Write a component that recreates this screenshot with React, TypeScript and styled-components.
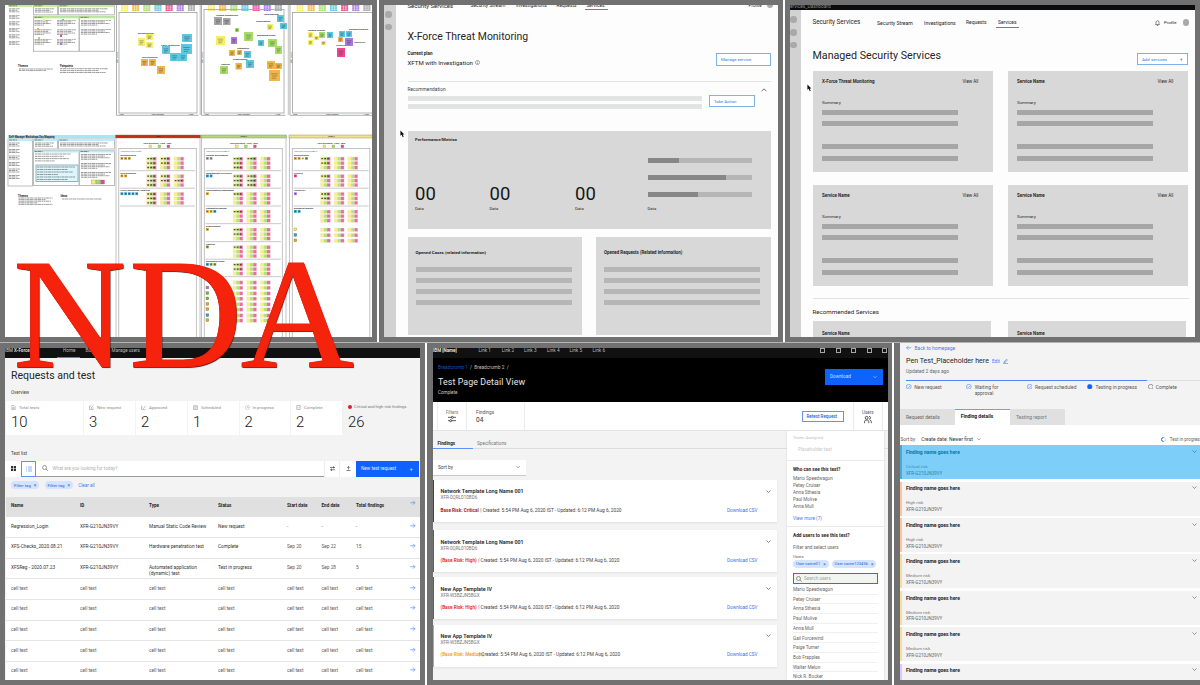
import React from "react";
import styled, { createGlobalStyle } from "styled-components";

const Global = createGlobalStyle`
  * { box-sizing: border-box; }
  body { margin: 0; background: #717171; overflow: hidden; }
  #root { font-family: Roboto, "Liberation Sans", sans-serif; color: #262626; }
`;

const BLUE = "#0f62fe";

/* ---------- shared parts ---------- */

const Page = styled.div`
  position: relative;
  width: 1200px;
  height: 685px;
  overflow: hidden;
  background: #fff;
`;
const FrameRow = styled.div<{ $cols: string }>`
  display: grid;
  grid-template-columns: ${(p) => p.$cols};
  gap: 2px;
  height: 342px;
`;
const Seam = styled.div`
  height: 1px;
  background: #b4b4b4;
`;
const Frame = styled.section<{ $pad?: string }>`
  background: #717171;
  padding: ${(p) => p.$pad ?? "5px"};
  overflow: hidden;
`;
const Screen = styled.div<{ $bg?: string }>`
  display: flex;
  width: 100%;
  height: 100%;
  overflow: hidden;
  background: ${(p) => p.$bg ?? "#fdfdfd"};
`;
const Column = styled.div<{ $pad?: string }>`
  flex: 1;
  min-width: 0;
  padding: ${(p) => p.$pad ?? "0"};
`;
const Text = styled.span<{ $s: number; $w?: number; $c?: string; $ls?: number }>`
  display: block;
  padding-top: 1px;
  white-space: nowrap;
  font-size: ${(p) => p.$s}px;
  line-height: 1.2;
  font-weight: ${(p) => p.$w ?? 400};
  color: ${(p) => p.$c ?? "#262626"};
  letter-spacing: ${(p) => p.$ls ?? 0}px;
`;
const Line = styled.div<{ $h: number; $mt?: number; $gap?: number; $between?: boolean }>`
  display: flex;
  align-items: center;
  justify-content: ${(p) => (p.$between ? "space-between" : "flex-start")};
  gap: ${(p) => p.$gap ?? 0}px;
  height: ${(p) => p.$h}px;
  margin-top: ${(p) => p.$mt ?? 0}px;
`;
const Divider = styled.div<{ $mt?: number; $c?: string }>`
  height: 1px;
  margin-top: ${(p) => p.$mt ?? 0}px;
  background: ${(p) => p.$c ?? "#e2e2e2"};
`;
const Rail = styled.aside<{ $w: number; $top: number; $gap: number; $inset: number }>`
  display: flex;
  flex-direction: column;
  flex: none;
  gap: ${(p) => p.$gap}px;
  width: ${(p) => p.$w}px;
  padding-left: ${(p) => p.$inset}px;
  background: #d2d2d2;
  > :first-child { margin-top: ${(p) => p.$top}px; }
`;
const Dot = styled.i<{ $d?: number }>`
  flex: none;
  width: ${(p) => p.$d ?? 6.5}px;
  height: ${(p) => p.$d ?? 6.5}px;
  border-radius: 50%;
  background: #a9a9a9;
`;
const Bar = styled.div<{ $w: number; $h?: number; $mt?: number; $c?: string }>`
  width: ${(p) => p.$w}px;
  height: ${(p) => p.$h ?? 5}px;
  margin-top: ${(p) => p.$mt ?? 0}px;
  background: ${(p) => p.$c ?? "#b6b6b6"};
`;
const GhostButton = styled.div<{ $w: number; $h: number; $mt?: number; $c?: string }>`
  display: flex;
  flex: none;
  align-items: center;
  justify-content: space-between;
  width: ${(p) => p.$w}px;
  height: ${(p) => p.$h}px;
  margin-top: ${(p) => p.$mt ?? 0}px;
  padding: 0 4px;
  border: 1px solid ${(p) => p.$c ?? "#7fb0ea"};
  background: #fff;
`;
const NavGrid = styled.nav<{ $cols: string; $h: number; $mt?: number }>`
  display: grid;
  grid-template-columns: ${(p) => p.$cols};
  align-items: center;
  height: ${(p) => p.$h}px;
  margin-top: ${(p) => p.$mt ?? 0}px;
`;
const NavActive = styled.div`
  width: 23px;
  padding: 2px 0 1px 2px;
  border-bottom: 1px solid #7a7a7a;
`;
const Pointer = styled.svg<{ $x: number; $y: number }>`
  position: absolute;
  left: ${(p) => p.$x}px;
  top: ${(p) => p.$y}px;
  width: 5px;
  height: 8px;
`;
const Cursor = ({ x, y }: { x: number; y: number }) => (
  <Pointer $x={x} $y={y} viewBox="0 0 5 8">
    <path d="M.4.4v5.4l1.3-1.1 1 2.5 1-.4-1-2.4h1.7z" fill="#111" />
  </Pointer>
);
const Chevron = ({ up, c = "#555", s = 5 }: { up?: boolean; c?: string; s?: number }) => (
  <svg width={s} height={s} viewBox="0 0 10 10" fill="none" stroke={c} strokeWidth="1.4">
    <path d={up ? "M1 7l4-4 4 4" : "M1 3l4 4 4-4"} />
  </svg>
);
const Bell = () => (
  <svg width="5" height="6" viewBox="0 0 10 12" fill="none" stroke="#444" strokeWidth="1.2">
    <path d="M1 9h8L8 7V4.500a3 3 0 0 0-6 0V7zM4 9.500v1.500h2V9.500" />
  </svg>
);
const Arrow = ({ left, s = 5.5 }: { left?: boolean; s?: number }) => (
  <svg width={s} height={s} viewBox="0 0 10 10" fill="none" stroke="#5a91fb" strokeWidth="1.3">
    <path d={left ? "M9.500 5H.8M4.500 1.500L1 5l3.500 3.500" : "M.5 5h8.700M5.500 1.500L9 5 5.500 8.500"} />
  </svg>
);
const Magnifier = () => (
  <svg width="6" height="6" viewBox="0 0 12 12" fill="none" stroke="#555" strokeWidth="1.2">
    <circle cx="5" cy="5" r="4" />
    <path d="M8 8l3.500 3.500" />
  </svg>
);

/* ---------- 1. research whiteboard ---------- */

const Y = "#f6ee6e", O = "#f0b64a", G = "#a9dd6a", C = "#5ec8e2", P = "#e8488f", V = "#a878e0", S = "#a5a5a5";
const Canvas = styled.svg`
  display: block;
  background: #fff;
`;

type Box = [number, number, number, number, string];
const NOTES: Box[] = [
  [138, 38, 7, 8, Y], [146, 34, 7, 6, Y], [146, 42, 7, 6, Y],
  [141, 59, 7, 7, O], [149, 59, 7, 7, O], [157, 66, 8, 8, O],
  [182, 34, 10, 8, C], [162, 46, 8, 8, C], [181, 44, 11, 10, C], [170, 53, 9, 8, C], [179, 53, 8, 8, C],
  [214, 17, 8, 8, S], [223, 18, 7.5, 7, S], [277, 15, 7, 7, C], [267, 24, 6, 6, Y], [280, 23, 7, 6, C],
  [235, 28, 4, 4, G], [244, 32, 9, 9, G], [216, 36, 9, 9, Y], [231, 37, 6, 7, V], [258, 40, 6, 6, C],
  [268, 39, 9, 8, G], [275, 46, 7, 8, G], [229, 50, 6, 6, O], [237, 50, 5, 5, O], [244, 51, 7, 7, C],
  [246, 60, 8, 8, C], [235.5, 63, 6.5, 6.5, O], [220, 66, 8, 8, G], [267, 61, 8, 8, O], [275, 63, 7, 6, O], [269, 70, 11, 11, O],
  [308, 32, 5, 6, Y], [314, 36, 5, 4, Y], [319, 32, 6, 6, G], [308, 40, 5, 5, Y], [321, 41, 5, 4, Y],
  [327, 32, 6, 6, C], [339, 31, 6, 6, C], [346, 31, 6, 6, C], [338, 37, 5, 5, O], [345, 38, 8, 8, V], [337, 48, 8, 9, P],
];
const TAGS: [number, number, string][] = [
  [138, 33.5, "Dissatisfaction"], [161, 45.5, "Policy, monitoring"], [142, 58.2, "User behaviour"],
  [216, 15.7, "Lacking transparency"], [264, 15, "Task Difficulty"], [256, 22, "Consolidation"], [257, 36, "Dashboard/Usage"],
  [237, 49, "Automation"], [233, 59.7, "Requirements"], [221, 64.7, "Timeline"],
  [308, 30.7, "Lacking insights"], [349, 29.7, "Document Reports"], [354, 42.7, "Having API"], [336, 45.9, "Services"],
];
const Scribble = ({ x, y, w, n, step = 1.6 }: { x: number; y: number; w: number; n: number; step?: number }) => (
  <g stroke="#333" strokeWidth=".6" strokeDasharray="2.2 .4 3.5 .5 1.3 .4" opacity=".8">
    {Array.from({ length: n }, (_, i) => (
      <path key={i} d={`M${x} ${y + i * step}h${w * [1, 0.8, 0.95, 0.55][i % 4]}`} />
    ))}
  </g>
);
const ChipSet = ({ x }: { x: number }) => (
  <g>
    {[Y, O, G, C, P, V, S].map((c, i) => (
      <g key={c}>
        <rect x={x + i * 11.15} y={5} width={7} height={6} fill={c} />
        <path
          d={`M${x + i * 11.15 + 2.3} 5v6m2.4 -6v6M${x + i * 11.15} 7h7m-7 2.2h7`}
          stroke="#fff" strokeWidth=".45"
        />
      </g>
    ))}
  </g>
);
const MatrixBoard = ({ x, w, top = 12.5 }: { x: number; w: number; top?: number }) => (
  <g>
    <path d={`M${x} 5V115.300h${w + 4}`} fill="none" stroke="#b0b0b0" strokeWidth="1" />
    <rect x={x + 2.5} y={top} width={w} height={113 - top} fill="none" stroke="#aaa" strokeWidth=".9" />
    <text x={x + 3} y={115} fontSize="2.3">Low</text>
    <text x={x + w / 2 - 4} y={115} fontSize="2.3">User Impact</text>
    <text x={x + w - 6} y={115} fontSize="2.3">High</text>
    <text transform={`translate(${x + 1.8} 63) rotate(-90)`} fontSize="2.2">Effort Level</text>
  </g>
);
const TRIO = ["#f7f08a", "#b5e27e", "#ec6aa8"];
const Trios = ({ x, y, used = 0 }: { x: number; y: number; used?: number }) => (
  <g>
    {[0, 1, 2].map((k) => (
      <g key={k}>
        {TRIO.map((c, i) => (
          <rect key={c} x={x + k * 13.7 + i * 3.3} y={y} width={3.3} height={3.5} fill={c} />
        ))}
        <rect x={x + k * 13.7} y={y} width={9.9} height={3.5} fill="none" stroke="#f6dccb" strokeWidth=".3" />
        {k < used && (
          <path d={`M${x + k * 13.7 + 0.8} ${y + 1.7}h8.2`} stroke="#2d2d12" strokeWidth="1.3" strokeDasharray="1.8 1.2" opacity=".8" />
        )}
      </g>
    ))}
  </g>
);
type Group = { y: number; label: string; marks: string[]; used: number[] };
type Theme = { x: number; w: number; head: string; name: string; label: string; trio: number; groups: Group[]; tail: [number, string][] };
const B = "#3b9cc4", D = "#d9a92f", N = "#7fae3c";
const THEMES: Theme[] = [
  {
    x: 116, w: 84, head: "#c92a1e", name: "Red", label: "Themes from draft", trio: 146.5, tail: [],
    groups: [
      { y: 157, label: "Dissatisfaction", marks: [D, D, D], used: [2, 2, 1] },
      { y: 174.5, label: "User behaviour", marks: [D, D], used: [2, 3, 1] },
      { y: 192.3, label: "Policy, monitoring, reporting", marks: [B, B, B, B, B], used: [1, 1, 1] },
    ],
  },
  {
    x: 201.5, w: 84.5, head: "#b4d97a", name: "DRAFT", label: "Themes from DRAFT", trio: 233,
    tail: [[280.8, ""], [286.1, V], [291.7, N], [297, N], [302.6, D], [307.8, D], [313.8, B], [318.8, D]],
    groups: [
      { y: 157, label: "Lacking development", marks: [S, S], used: [2, 1, 1] },
      { y: 174.5, label: "Task difficulty on service", marks: [B, B], used: [2, 2, 2] },
      { y: 192.3, label: "Consolidation/Aggregation", marks: [D], used: [1, 0, 0] },
      { y: 210, label: "Automation/Manual", marks: [D, D, B], used: [1, 0, 0] },
      { y: 228, label: "Requirements", marks: [D], used: [1, 1, 0] },
      { y: 245.5, label: "Timeline", marks: [N], used: [1, 0, 0] },
      { y: 263, label: "Dashboard/Usage", marks: [B, N, N], used: [1, 1, 0] },
    ],
  },
  {
    x: 289.5, w: 84, head: "#efe48a", name: "DRAFT", label: "Themes from DRAFT", trio: 320.5,
    tail: [[228, Y], [233.5, B], [239, D]],
    groups: [
      { y: 157, label: "Differentiators", marks: [D, D, Y, N], used: [1, 1, 0] },
      { y: 174.5, label: "Services", marks: [P], used: [1, 0, 0] },
      { y: 192.3, label: "Having API", marks: [V], used: [1, 1, 0] },
      { y: 210, label: "Document Reports", marks: [B, B], used: [0, 0, 0] },
    ],
  },
];
const ThemeBoard = ({ t }: { t: Theme }) => (
  <g>
    <path d={`M${t.x} 138V337M${t.x + t.w} 138V337`} stroke="#c4c4c4" strokeWidth="1" />
    <rect x={t.x - 0.5} y={135} width={t.w + 1} height={3} fill={t.head} stroke="#7c7c50" strokeWidth=".4" />
    <text x={t.x + t.w / 2} y={137.4} fontSize="2.2" textAnchor="middle">{t.name}</text>
    <rect x={t.x + 2.8} y={148.5} width={t.w - 6.5} height={190} fill="none" stroke="#b4b4b4" strokeWidth=".8" />
    <text x={t.trio - 3} y={143.6} fontSize="2.3" fontWeight="700">User Research · Pain · Idea</text>
    {[Y, G, P].map((c, i) => (
      <rect key={c} x={t.trio + 2.5 + i * 9} y={145} width={2.8} height={2.8} fill={c} stroke="#8a8a50" strokeWidth=".3" />
    ))}
    <text x={t.x + 4.5} y={151.8} fontSize="2.5" fill="#2586ad">{t.label}</text>
    {t.groups.map((g, gi) => (
      <g key={g.label}>
        <text x={t.x + 4.5} y={g.y - 1} fontSize="2.3" fontWeight="700">{g.label}</text>
        {g.marks.map((m, i) => (
          <g key={i}>
            <rect x={t.x + 4.5 + i * 3.7} y={g.y} width={2.8} height={2.8} fill={m} />
            <path d={`M${t.x + 5.2 + i * 3.7} ${g.y + 1.4}h1.4`} stroke="#333" strokeWidth=".7" />
          </g>
        ))}
        {g.used.map((u, i) => <Trios key={i} x={t.trio} y={g.y + i * 4.4} used={u} />)}
        {(gi < 3 || t.tail.length > 3) && (
          <path d={`M${t.x + 4} ${g.y + 13.7}h${t.w - 9}`} stroke="#c2c2c2" strokeWidth=".9" />
        )}
      </g>
    ))}
    {t.tail.map(([y, c]) => (
      <g key={y}>
        {c && <rect x={t.x + 4.5} y={y} width={2.8} height={2.8} fill={c} stroke="#665" strokeWidth=".3" />}
        <Trios x={t.trio} y={y} />
      </g>
    ))}
  </g>
);
const BriefBoard = ({ y, head, tint }: { y: number; head: string; tint?: boolean }) => {
  const boxes: [number, number, number, number][] = [
    [8, y, 24.5, 47], [33.5, y, 24, 10], [58.5, y, 56, 10], [33.5, y + 11.5, 45.5, 35], [79.5, y + 11.5, 35, 35],
  ];
  return (
    <g>
      {boxes.map(([bx, by, bw, bh], i) => (
        <g key={i}>
          <rect x={bx} y={by} width={bw} height={bh} fill="#fff" stroke={i || tint ? "#b5b5b5" : "none"} strokeWidth=".9" />
          <rect x={bx} y={by} width={bw} height={2} fill={head} />
          <path d={`M${bx + 1} ${by + 1}h8`} stroke="#444" strokeWidth=".6" strokeDasharray="3 .5" />
        </g>
      ))}
      {[0, 1, 2, 3, 4, 5].map((i) => <Scribble key={i} x={9} y={y + 4 + i * 6.5} w={11} n={3} step={1.5} />)}
      <Scribble x={35} y={y + 4} w={19} n={3} />
      <Scribble x={60} y={y + 4} w={48} n={3} step={1.5} />
      {tint ? (
        <g>
          <Scribble x={35} y={y + 15} w={36} n={4} step={2.3} />
          <rect x={36} y={y + 26} width={42} height={16.5} fill="#def5fb" stroke="#7aa3b0" strokeWidth=".8" />
          <Scribble x={37} y={y + 28} w={38} n={6} step={2.5} />
        </g>
      ) : (
        [0, 1, 2].map((i) => (
          <g key={i}>
            <Scribble x={34.5} y={y + 15.5 + i * 9.5} w={17} n={4} />
            <Scribble x={57} y={y + 15.5 + i * 9.5} w={19} n={4} />
          </g>
        ))
      )}
      {(tint ? [0, 1, 2] : [0, 1]).map((i) => <Scribble key={i} x={81} y={y + 15.5 + i * 9} w={30} n={4} />)}
    </g>
  );
};
const Whiteboard = () => (
  <Canvas width="367" height="332" viewBox="5 5 367 332" fill="#222" fontFamily="Roboto, sans-serif">
    <BriefBoard y={4.8} head="#b9ee88" />
    {[[43, 19, Y], [62, 19, C], [37, 28, O], [60, 35, P], [38, 37, G], [60, 43, V]].map(([x, y, c]) => (
      <rect key={`${x}${y}`} x={x as number} y={y as number} width="2" height="2" fill={c as string} />
    ))}
    <text x="18" y="67.3" fontSize="2.7" fontWeight="700">Themes</text>
    <Scribble x={19} y={69} w={34} n={2} />
    <text x="60" y="67.3" fontSize="2.7" fontWeight="700">Painpoints</text>
    <Scribble x={60} y={68.7} w={48} n={3} step={1.9} />

    <ChipSet x={121} />
    <ChipSet x={208} />
    <ChipSet x={296.5} />
    <MatrixBoard x={116.5} w={78} />
    <path d="M200.300 5V115M288.500 5V115" stroke="#cfcfcf" strokeWidth="1.5" />
    <MatrixBoard x={201.5} w={80} top={9.5} />
    <MatrixBoard x={290} w={80} />
    {NOTES.map(([x, y, w, h, c]) => (
      <g key={`${x}-${y}`}>
        <rect x={x} y={y} width={w} height={h} fill={c} />
        <path
          d={`M${x + w * 0.2} ${y + h * 0.35}h${w * 0.6}m${-w * 0.55} ${h * 0.2}h${w * 0.5}m${-w * 0.5} ${h * 0.2}h${w * 0.4}`}
          stroke="#222" strokeWidth=".6" opacity=".55" fill="none"
        />
      </g>
    ))}
    {TAGS.map(([x, y, s]) => <text key={s} x={x} y={y} fontSize="2.3" fontWeight="700">{s}</text>)}

    <rect x="8" y="135" width="107" height="3.2" fill="#a6e6f7" />
    <text x="9" y="137.6" fontSize="2.6" fontWeight="700">Self-Manager Workshops Day Mapping</text>
    <BriefBoard y={139} head="#bdebf7" tint />
    {[Y, G, P].map((c, i) => <rect key={c} x={91.5 + i * 4.5} y={180} width="4" height="4" fill={c} stroke="#777" strokeWidth=".3" />)}
    <text x="18" y="196.5" fontSize="2.7" fontWeight="700">Themes</text>
    <Scribble x={18.5} y={198} w={34} n={5} />
    <text x="60.5" y="196.5" fontSize="2.7" fontWeight="700">Ideas</text>
    <Scribble x={62} y={199} w={40} n={1} />
    {THEMES.map((t) => <ThemeBoard key={t.x} t={t} />)}
  </Canvas>
);

/* ---------- 2. threat monitoring wireframe ---------- */

const SplitRow = styled.div<{ $cols: string; $mt?: number; $gap?: number }>`
  display: grid;
  grid-template-columns: ${(p) => p.$cols};
  column-gap: ${(p) => p.$gap ?? 0}px;
  align-items: start;
  margin-top: ${(p) => p.$mt ?? 0}px;
`;
const WireCard = styled.div<{ $h: number; $mt?: number; $pad?: string }>`
  height: ${(p) => p.$h}px;
  margin-top: ${(p) => p.$mt ?? 0}px;
  padding: ${(p) => p.$pad ?? "10px 9px"};
  background: #d8d8d8;
`;
const Meter = styled(Bar)<{ $v: number }>`
  background: linear-gradient(to right, #878787 ${(p) => p.$v}px, #b6b6b6 ${(p) => p.$v}px);
`;
const Metric = styled.div`
  padding-top: 25px;
`;
const BigNumber = styled(Text)`
  height: 21px;
  line-height: 20px;
`;
const RecommendationHead = styled.div`
  display: flex;
  align-items: center;
  justify-content: space-between;
  height: 7px;
  margin-top: 4px;
  padding-right: 3.5px;
`;

const ThreatMonitoring = () => (
  <Screen>
    <Rail $w={12} $inset={1} $top={-6.25} $gap={6}>
      <Dot />
      <Dot />
      <Dot />
    </Rail>
    <Column $pad="0 7.5px 0 11.5px">
      <NavGrid $cols="63px 45.5px 40.5px 28px 164px 18px 8px" $h={11} $mt={-5.5}>
        <Text $s={6}>Security Services</Text>
        <Text $s={4.95}>Security Stream</Text>
        <Text $s={4.95}>Investigations</Text>
        <Text $s={4.8}>Requests</Text>
        <NavActive><Text $s={4.8}>Services</Text></NavActive>
        <Text $s={4.6}>Profile</Text>
        <Dot $d={6} />
      </NavGrid>
      <Line $h={14} $mt={19}><Text $s={10.45}>X-Force Threat Monitoring</Text></Line>
      <SplitRow $cols="308.5px 55px" $mt={6.5}>
        <div>
          <Line $h={7}><Text $s={4.5} $w={700}>Current plan</Text></Line>
          <Line $h={9} $mt={1} $gap={2}>
            <Text $s={6.1}>XFTM with Investigation</Text>
            <svg width="5" height="5" viewBox="0 0 10 10" fill="none" stroke="#555" strokeWidth="1"><circle cx="5" cy="5" r="4.2" /><path d="M5 4.500V8M5 2v1.200" /></svg>
          </Line>
        </div>
        <GhostButton $w={55} $h={13} $mt={3}><Text $s={4.3} $c="#2f7de0">Manage service</Text></GhostButton>
      </SplitRow>
      <Divider $mt={14} />
      <RecommendationHead><Text $s={4.85} $c="#444">Recommendation</Text><Chevron up s={6} /></RecommendationHead>
      <SplitRow $cols="294.5px 46px" $gap={7} $mt={2}>
        <div>
          <Bar $w={294.5} $c="#e2e3e3" $mt={1} />
          <Bar $w={294.5} $c="#e2e3e3" $mt={3} />
        </div>
        <GhostButton $w={46} $h={12}><Text $s={4.3} $c="#2f7de0">Take Action</Text></GhostButton>
      </SplitRow>
      <WireCard $h={98} $mt={22} $pad="4.5px 7.5px">
        <Line $h={7}><Text $s={4.35} $w={700}>Performance/Metrics</Text></Line>
        <SplitRow $cols="74.5px 85.5px 72.5px 105px" $mt={15}>
          {[0, 1, 2].map((i) => (
            <Metric key={i}>
              <BigNumber $s={18.5} $c="#161616">00</BigNumber>
              <Line $h={7} $mt={1.5}><Text $s={4.2}>Data</Text></Line>
            </Metric>
          ))}
          <div>
            <Meter $w={104.5} $v={31} />
            <Meter $w={104.5} $v={78.5} $mt={12} />
            <Meter $w={104.5} $v={50} $mt={12} />
            <Line $h={7} $mt={8.5}><Text $s={4.2}>Data</Text></Line>
          </div>
        </SplitRow>
      </WireCard>
      <SplitRow $cols="174.5px 174.5px" $gap={14} $mt={8}>
        {["Opened Cases (related information)", "Opened Requests (Related information)"].map((t, i) => (
          <WireCard key={t} $h={98} $pad="12px 8px">
            <Line $h={7}><Text $s={i ? 4.42 : 4.4} $w={700}>{t}</Text></Line>
            <Bar $w={156} $h={5.5} $mt={10.5} />
            <Bar $w={156} $h={5.5} $mt={5.6} />
            <Bar $w={156} $h={5.5} $mt={5.6} />
            <Bar $w={156} $h={5.5} $mt={5.6} />
          </WireCard>
        ))}
      </SplitRow>
    </Column>
  </Screen>
);

/* ---------- 3. managed services wireframe ---------- */

const BrowserBar = styled.div`
  flex: none;
  height: 5px;
  overflow: hidden;
  background: #0b0c0d;
`;
const BrowserTitle = styled(Text)`
  margin-top: -2.5px;
`;
const Stack = styled.div`
  display: flex;
  flex-direction: column;
  width: 100%;
`;
const Body = styled.div`
  display: flex;
  flex: 1;
  min-height: 0;
  overflow: hidden;
`;
const ServiceCard = ({ name }: { name: string }) => (
  <WireCard $h={101} $pad="7px 9.5px">
    <SplitRow $cols="140.5px 20px">
      <Line $h={8}><Text $s={4.45} $w={700}>{name}</Text></Line>
      <Line $h={8}><Text $s={4.5}>View All</Text></Line>
    </SplitRow>
    <Line $h={8} $mt={12.5}><Text $s={4.4}>Summary</Text></Line>
    <Bar $w={136} $mt={3.5} $c="#a6a6a6" />
    <Bar $w={136} $mt={6} $c="#a6a6a6" />
    <Bar $w={136} $mt={18} $c="#a6a6a6" />
    <Bar $w={136} $mt={7} $c="#a6a6a6" />
  </WireCard>
);
const ManagedServices = () => (
  <Screen>
    <Stack>
      <BrowserBar><BrowserTitle $s={4.8} $c="#8a8a8a">ervices_Dashboard</BrowserTitle></BrowserBar>
      <Body>
        <Rail $w={10.5} $inset={0} $top={6.3} $gap={6.3}><Dot /><Dot /><Dot /></Rail>
        <Column $pad="5.5px 6px 0 12px">
          <NavGrid $cols="64.5px 47px 42px 30px 159px 9px 18.5px 8px" $h={14}>
            <Text $s={6.3}>Security Services</Text>
            <Text $s={5.1}>Security Stream</Text>
            <Text $s={5.1}>Investigations</Text>
            <Text $s={4.95}>Requests</Text>
            <NavActive><Text $s={4.9}>Services</Text></NavActive>
            <Bell />
            <Text $s={4.4}>Profile</Text>
            <Dot />
          </NavGrid>
          <SplitRow $cols="324.5px 50.5px" $mt={18.5}>
            <Line $h={14} $mt={0.5}><Text $s={10.7}>Managed Security Services</Text></Line>
            <GhostButton $w={50.5} $h={12.5} $mt={4.5}>
              <Text $s={4.4} $c="#2f7de0">Add services</Text>
              <Text $s={4.5} $c="#2f7de0">+</Text>
            </GhostButton>
          </SplitRow>
          <SplitRow $cols="180px 180px" $gap={15} $mt={5.5}>
            <ServiceCard name="X-Force Threat Monitoring" />
            <ServiceCard name="Service Name" />
          </SplitRow>
          <SplitRow $cols="180px 180px" $gap={15} $mt={13}>
            <ServiceCard name="Service Name" />
            <ServiceCard name="Service Name" />
          </SplitRow>
          <Divider $mt={12.5} />
          <Line $h={9} $mt={8.5}><Text $s={6.2}>Recommended Services</Text></Line>
          <SplitRow $cols="178px 178px" $gap={17} $mt={4.5}>
            {[0, 1].map((i) => (
              <WireCard key={i} $h={20} $pad="8px 9.5px">
                <Line $h={8}><Text $s={4.45} $w={700}>Service Name</Text></Line>
              </WireCard>
            ))}
          </SplitRow>
        </Column>
      </Body>
    </Stack>
  </Screen>
);

/* ---------- 4. requests dashboard ---------- */

const TopBar = styled.nav<{ $cols: string; $h: number }>`
  display: grid;
  grid-template-columns: ${(p) => p.$cols};
  grid-template-rows: 4.5px;
  align-items: center;
  flex: none;
  height: ${(p) => p.$h}px;
  background: #111;
`;
const NavTab = styled.div`
  align-self: start;
  width: 23px;
  height: 10px;
  border-bottom: 1px solid #4a84f8;
`;
const NavTabLabel = styled(Text)`
  margin: -1px 0 0 6px;
`;
const Stats = styled.div`
  display: grid;
  grid-template-columns: 78px 52px 52px 51.5px 51.5px 52px 1fr;
  height: 34px;
`;
const Stat = styled.div<{ $plain?: boolean }>`
  padding: 3px 0 0 5px;
  border-right: ${(p) => (p.$plain ? "0" : "1px solid #f3f3f3")};
  background: ${(p) => (p.$plain ? "transparent" : "#fff")};
`;
const Toolbar = styled.div`
  display: grid;
  flex: none;
  grid-template-columns: 16px 15px 288px 15px 17px 62.5px;
  height: 16px;
  margin-right: 1.5px;
  background: #fff;
`;
const Tool = styled.div<{ $on?: boolean; $line?: boolean }>`
  display: flex;
  align-items: center;
  justify-content: center;
  border: ${(p) => (p.$on ? "1px solid #5c92fb" : "0")};
  border-left: ${(p) => (p.$on ? "1px solid #5c92fb" : p.$line ? "1px solid #eee" : "0")};
`;
const SearchBox = styled.div`
  display: flex;
  align-items: center;
  gap: 4.5px;
  padding-left: 6px;
  border-bottom: 1px solid #9a9a9a;
`;
const PrimaryButton = styled.div<{ $w: number; $h: number }>`
  display: flex;
  flex: none;
  align-items: center;
  justify-content: space-between;
  width: ${(p) => p.$w}px;
  height: ${(p) => p.$h}px;
  padding: 0 6px 0 5px;
  background: ${BLUE};
`;
const Chip = styled.div`
  display: flex;
  flex: none;
  align-items: center;
  gap: 3px;
  height: 7.5px;
  padding: 0 3px;
  border-radius: 4px;
  background: #d4e3fe;
`;
const Row = styled.div<{ $head?: boolean }>`
  display: grid;
  grid-template-columns: 69px 69px 69px 69px 34.5px 34.5px 54px 1fr;
  align-items: start;
  height: 20.7px;
  padding: ${(p) => (p.$head ? 5 : 5.4)}px 0 0 5px;
  border-bottom: 1px solid ${(p) => (p.$head ? "#e0e0e0" : "#e4e4e4")};
  background: ${(p) => (p.$head ? "#e0e0e0" : "#fff")};
  > svg { margin-top: ${(p) => (p.$head ? -2 : 0)}px; }
`;
const Pane = styled.div<{ $pad?: string }>`
  flex: none;
  padding: ${(p) => p.$pad ?? "0"};
`;
const ROWS: string[][] = [
  ["Regression_Login", "XFR-G210JN39VY", "Manual Static Code Review", "New request", "-", "-", "-"],
  ["XFS-Checks_2020.08.21", "XFR-G210JN39VY", "Hardware penetration test", "Complete", "Sep 20", "Sep 22", "15"],
  ["XFSReg - 2020.07.23", "XFR-G210JN39VY", "Automated application\n(dynamic) test", "Test in progress", "Sep 20", "Sep 28", "5"],
  ...Array.from({ length: 5 }, () => Array(7).fill("cell text")),
];
const Cell = styled(Text)`
  white-space: pre;
  line-height: 6px;
`;
const DocIcon = ({ kind }: { kind: number }) => (
  <svg width="5" height="5" viewBox="0 0 10 10" fill="none" stroke="#8a8a8a" strokeWidth="1">
    {kind === 4 ? (
      <><circle cx="5" cy="5" r="4" strokeDasharray="2 1" /><path d="M5 3v2h2" /></>
    ) : (
      <path d={["M1.500 1h4L8.500 4v5h-7zM3 5h4M3 7h4", "M8 5v4H1V2h4M4 6l5-5M3.500 7h2", "M1 1v8h8M3 5l2 2 4-5", "M1 1.500h8v7.500H1zM4 1.500V9M5.500 4h2M5.500 6h2", "", "M1.500 1h7v8h-7zM3 5l1.500 1.500L7 3.500"][kind]} />
    )}
  </svg>
);
const STATS: [string, string][] = [
  ["Total tests", "10"], ["New request", "3"], ["Approved", "2"], ["Scheduled", "1"], ["In progress", "2"], ["Complete", "2"],
];
const RedDot = styled.i`
  width: 4px;
  height: 4px;
  border-radius: 50%;
  background: #e02020;
`;

const Requests = () => (
  <Screen $bg="#f3f3f3">
    <Stack>
      <TopBar $cols="52px 28.5px 26px 1fr" $h={10}>
        <Text $s={4.5} $c="#ddd"><span>IBM </span><b>X-Force Red</b></Text>
        <NavTab><NavTabLabel $s={4.6} $c="#bbb">Home</NavTabLabel></NavTab>
        <Text $s={4.5} $c="#bbb">Budget</Text>
        <Text $s={4.5} $c="#bbb">Manage users</Text>
      </TopBar>
      <Pane $pad="10.5px 0 0 6px">
        <Line $h={14}><Text $s={10.5}>Requests and test</Text></Line>
        <Line $h={7} $mt={6.5}><Text $s={4.5} $c="#444">Overview</Text></Line>
      </Pane>
      <Pane $pad="4.5px 0 0 1px">
        <Stats>
          {STATS.map(([label, n], i) => (
            <Stat key={label}>
              <Line $h={7} $gap={3}><DocIcon kind={i} /><Text $s={4.3} $c="#8a8a8a">{label}</Text></Line>
              <Line $h={15} $mt={4}><Text $s={14.8} $w={300} $c="#161616">{n}</Text></Line>
            </Stat>
          ))}
          <Stat $plain>
            <Line $h={7} $gap={2}><RedDot /><Text $s={4.1} $c="#777">Critical and high risk findings</Text></Line>
            <Line $h={15} $mt={4}><Text $s={14.8} $w={300} $c="#161616">26</Text></Line>
          </Stat>
        </Stats>
      </Pane>
      <Pane $pad="15px 0 4px 6px"><Line $h={7}><Text $s={4.6} $c="#444">Test list</Text></Line></Pane>
      <Toolbar>
        <Tool>
          <svg width="5" height="5" viewBox="0 0 10 10" fill="#333"><path d="M0 0h4.300v4.300H0zM5.700 0H10v4.300H5.700zM0 5.700h4.300V10H0zM5.700 5.700H10V10H5.700z" /></svg>
        </Tool>
        <Tool $on>
          <svg width="6" height="6" viewBox="0 0 12 12" stroke="#3c7cf8" strokeWidth="1.2"><path d="M4 2h8M4 6h8M4 10h8M0 2h1.800M0 6h1.800M0 10h1.800" /></svg>
        </Tool>
        <SearchBox><Magnifier /><Text $s={4.65} $c="#b0b0b0">What are you looking for today?</Text></SearchBox>
        <Tool $line>
          <svg width="5" height="5" viewBox="0 0 10 10" stroke="#333" strokeWidth="1.2" fill="none"><path d="M0 3h10M7 .5V5M0 7.500h10M3 5v5" /></svg>
        </Tool>
        <Tool $line>
          <svg width="5" height="5" viewBox="0 0 10 10" stroke="#333" strokeWidth="1.2" fill="none"><path d="M1 9h8M5 7V1M2.500 3.500L5 1l2.500 2.500" /></svg>
        </Tool>
        <PrimaryButton $w={62.5} $h={16}>
          <Text $s={4.65} $c="#e3edff">New test request</Text>
          <Text $s={5} $c="#e3edff">+</Text>
        </PrimaryButton>
      </Toolbar>
      <Pane $pad="5px 0 8px 6px">
        <Line $h={7} $gap={5.3}>
          {[0, 1].map((i) => (
            <Chip key={i}><Text $s={4.3} $c="#2463d8">Filter tag</Text><Text $s={4.6} $c="#2463d8">×</Text></Chip>
          ))}
          <Text $s={4.6} $c="#3c7cf8">Clear all</Text>
        </Line>
      </Pane>
      <Pane $pad="0 0 0 1px">
        <Row $head>
          {["Name", "ID", "Type", "Status", "Start date", "End date", "Total findings"].map((h) => (
            <Cell key={h} $s={4.6} $w={700}>{h}</Cell>
          ))}
          <Arrow />
        </Row>
        {ROWS.map((r, i) => (
          <Row key={i}>
            {r.map((c, j) => <Cell key={j} $s={4.75} $c={i < 3 && j < 4 ? "#333" : "#5a5a5a"}>{c}</Cell>)}
            <Arrow />
          </Row>
        ))}
      </Pane>
    </Stack>
  </Screen>
);

/* ---------- 5. test detail ---------- */

const Squares = styled.div`
  display: flex;
  gap: 10.6px;
`;
const Square = styled.i`
  flex: none;
  width: 5px;
  height: 5px;
  border: 1px solid #a5a5a5;
`;
const Hero = styled.header`
  display: flex;
  flex: none;
  justify-content: space-between;
  height: 44px;
  padding: 5.5px 5px 0 5px;
  background: #000;
`;
const InfoBar = styled.div`
  display: grid;
  flex: none;
  grid-template-columns: 5px 29px 58px 276.5px 52px 29.5px 5px;
  height: 29px;
  background: #fff;
  border-bottom: 1px solid #e4e4e4;
`;
const InfoCell = styled.div<{ $center?: boolean; $pl?: number }>`
  display: flex;
  flex-direction: column;
  align-items: ${(p) => (p.$center ? "center" : "flex-start")};
  gap: 0.4px;
  padding: 6.5px 0 0 ${(p) => p.$pl ?? 0}px;
  border-right: 1px solid #ebebeb;
`;
const DetailBody = styled.div`
  display: grid;
  grid-template-columns: 354px 96.5px 1fr;
  flex: 1;
  min-height: 0;
  overflow: hidden;
`;
const Tabs = styled.div`
  display: grid;
  grid-template-columns: 39.5px 1fr;
  height: 18px;
  border-bottom: 1px solid #dcdcdc;
`;
const Tab = styled.div<{ $on?: boolean }>`
  height: 18px;
  padding: 8.6px 0 0 4.5px;
  border-bottom: ${(p) => (p.$on ? "1.5px solid #5e93f8" : "0")};
`;
const Select = styled.div`
  display: flex;
  align-items: center;
  justify-content: space-between;
  width: 93px;
  height: 16px;
  margin-top: 10.5px;
  padding: 0 6px 0 5px;
  background: #fff;
  border-bottom: 1px solid #cacaca;
`;
const FindingCard = styled.article<{ $c: string; $mt: number }>`
  width: 344px;
  height: 42px;
  margin-top: ${(p) => p.$mt}px;
  padding: 7px 6px 0 6.5px;
  border-left: 1.5px solid ${(p) => p.$c};
  background: #fff;
  box-shadow: 0 1px 2px #00000014;
`;
const SidePanel = styled.aside`
  padding: 3px 5.5px 0 6px;
  background: #fff;
  box-shadow: 0 0 2px #00000020;
  overflow: hidden;
`;
const Strip = styled.div`
  margin-top: 17px;
  border-top: 1px solid #dcdcdc;
`;
const SearchUsers = styled.div`
  display: flex;
  align-items: center;
  gap: 2px;
  height: 11px;
  margin: 5px 0 0.7px;
  padding-left: 2px;
  border: 1px solid #2f6ef0;
  background: #f3f3f3;
`;
const UserRow = styled.div`
  display: flex;
  align-items: center;
  height: 9.73px;
  border-bottom: 1px solid #f0f0f0;
`;
const Bleed = styled.div<{ $mt: number }>`
  height: 1px;
  margin: ${(p) => p.$mt}px -6px 0;
  background: #eaeaea;
`;
const FINDINGS = [
  { t: "Network Template Long Name 001", id: "XFR-0QRL010BD6", risk: "Base Risk: Critical", c: "#a2191f", mt: 4.5 },
  { t: "Network Template Long Name 001", id: "XFR-0QRL010BD6", risk: "(Base Risk: High)", c: "#e8202f", mt: 8.3 },
  { t: "New App Template IV", id: "XFR-W3BZJN5BGX", risk: "(Base Risk: High)", c: "#e8202f", mt: 5 },
  { t: "New App Template IV", id: "XFR-W3BZJN5BGX", risk: "(Base Risk: Medium)", c: "#f0a030", mt: 5.3 },
];
const RiskSlot = styled.div<{ $w?: number }>`
  width: ${(p) => (p.$w ? `${p.$w}px` : "auto")};
`;

const TestDetail = () => (
  <Screen $bg="#f3f3f3">
    <Stack>
      <TopBar $cols="45.5px 23.3px 22.3px 23px 22.5px 23px 227.5px auto" $h={10}>
        <Text $s={4.5} $c="#e5e5e5"><b>IBM [Name]</b></Text>
        {[1, 2, 3, 4, 5, 6].map((n) => <Text key={n} $s={4.7} $c="#bbb">Link {n}</Text>)}
        <Squares>{[0, 1, 2, 3, 4].map((n) => <Square key={n} />)}</Squares>
      </TopBar>
      <Hero>
        <div>
          <Line $h={7} $gap={2}>
            <Text $s={4.8} $c="#1650c4">Breadcrumb 1</Text>
            <Text $s={4.8} $c="#c0c0c0">/&nbsp; Breadcrumb 2 &nbsp;/</Text>
          </Line>
          <Line $h={12} $mt={5.5}><Text $s={8.8} $c="#e8e8e8" $ls={0.12}>Test Page Detail View</Text></Line>
          <Line $h={6} $mt={1}><Text $s={4.5} $c="#ccc">Complete</Text></Line>
        </div>
        <Line $h={16} $mt={5}>
          <PrimaryButton $w={58} $h={16}><Text $s={4.7} $c="#cfe0ff">Download</Text><Chevron c="#cfe0ff" s={4} /></PrimaryButton>
        </Line>
      </Hero>
      <InfoBar>
        <InfoCell />
        <InfoCell $center>
          <Text $s={4.6} $c="#777">Filters</Text>
          <svg width="8" height="8" viewBox="0 0 12 12" fill="none" stroke="#222" strokeWidth="1.1"><path d="M0 3.500h5M8 3.500h4M0 8.500h2.500M5.500 8.500H12" /><circle cx="6.5" cy="3.5" r="1.5" /><circle cx="4" cy="8.5" r="1.5" /></svg>
        </InfoCell>
        <InfoCell $pl={9}>
          <Text $s={4.8} $c="#555">Findings</Text>
          <Text $s={6.6} $c="#333">04</Text>
        </InfoCell>
        <span />
        <InfoCell $pl={0}>
          <GhostButton $w={42} $h={11} $mt={2.5} $c="#5f94f5"><Text $s={4.5} $w={500} $c="#2463e8">Retest Request</Text></GhostButton>
        </InfoCell>
        <InfoCell $center>
          <Text $s={4.5} $c="#555">Users</Text>
          <svg width="8" height="9" viewBox="0 0 12 12" fill="none" stroke="#333" strokeWidth="1.2"><circle cx="4" cy="3.5" r="2.2" /><path d="M.8 11.500V9.500a2.500 2.500 0 0 1 2-2.500h2.400a2.500 2.500 0 0 1 2 2.500v2M7.500 1.200a2.200 2.200 0 0 1 0 4.500M9 7a2.500 2.500 0 0 1 2 2.500v2" /></svg>
        </InfoCell>
      </InfoBar>
      <DetailBody>
        <div>
          <Tabs>
            <Tab $on><Text $s={4.6} $w={700}>Findings</Text></Tab>
            <Tab><Text $s={4.7} $c="#777">Specifications</Text></Tab>
          </Tabs>
          <Select><Text $s={4.8} $c="#444">Sort by</Text><Chevron s={4} /></Select>
          {FINDINGS.map((f, i) => (
            <FindingCard key={i} $c={f.c} $mt={f.mt}>
              <Line $h={8} $between><Text $s={5.35} $w={600}>{f.t}</Text><Chevron /></Line>
              <Line $h={5}><Text $s={4.6} $c="#777">{f.id}</Text></Line>
              <Line $h={7} $mt={6.5} $between>
                <Line $h={7} $gap={1.5}>
                  <RiskSlot $w={i === 3 ? 37 : undefined}><Text $s={4.7} $w={i === 0 ? 700 : 600} $c={f.c}>{f.risk}</Text></RiskSlot>
                  <Text $s={4.79} $c="#444">| Created: 5:54 PM Aug 6, 2020 IST - Updated: 6:12 PM Aug 6, 2020</Text>
                </Line>
                <Pane $pad="0 13.5px 0 0"><Text $s={4.65} $c="#2f6ff2">Download CSV</Text></Pane>
              </Line>
            </FindingCard>
          ))}
        </div>
        <SidePanel>
          <Line $h={7}><Text $s={4.2} $c="#c2c2c2">Tester Assigned</Text></Line>
          <Pane $pad="0 0 0 5px"><Line $h={7} $mt={4.5}><Text $s={4.7} $c="#c6c6c6">Placeholder text</Text></Line></Pane>
          <Bleed $mt={7} />
          <Line $h={7} $mt={5}><Text $s={4.7} $w={700}>Who can see this test?</Text></Line>
          <Pane $pad="2px 0 0">
            {["Mario Speedwagon", "Petey Cruiser", "Anna Sthesia", "Paul Molive", "Anna Mull"].map((n) => (
              <Line key={n} $h={7.15}><Text $s={4.65} $c="#666">{n}</Text></Line>
            ))}
          </Pane>
          <Line $h={7} $mt={4.5}><Text $s={4.65} $c="#3f7cf0">View more (7)</Text></Line>
          <Bleed $mt={4.5} />
          <Line $h={7} $mt={5}><Text $s={4.75} $w={700}>Add users to see this test?</Text></Line>
          <Line $h={7} $mt={4.5}><Text $s={4.7} $c="#666">Filter and select users</Text></Line>
          <Line $h={7} $mt={1.5}><Text $s={4.2} $c="#666">Users</Text></Line>
          <Line $h={8} $mt={1} $gap={3}>
            <Chip><Text $s={4.1} $c="#2463d8">User name01</Text><Text $s={4.5} $c="#2463d8">×</Text></Chip>
            <Chip><Text $s={4.1} $c="#2463d8">User name123456</Text><Text $s={4.5} $c="#2463d8">×</Text></Chip>
          </Line>
          <SearchUsers><Magnifier /><Text $s={4.65} $c="#a5a5a5">Search users</Text></SearchUsers>
          {["Mario Speedwagon", "Petey Cruiser", "Anna Sthesia", "Paul Molive", "Anna Mull", "Gail Forcewind", "Paige Turner", "Bob Frapples", "Walter Melon", "Nick R. Bocker"].map((n) => (
            <UserRow key={n}><Text $s={4.65} $c="#666">{n}</Text></UserRow>
          ))}
        </SidePanel>
        <Strip />
      </DetailBody>
    </Stack>
  </Screen>
);

/* ---------- 6. pen test progress ---------- */

const PenHead = styled.header`
  flex: none;
  height: 66px;
  padding: 1.5px 0 0 6px;
  background: #f3f3f3;
`;
const Progress = styled.div`
  height: 1.3px;
  margin-top: 5px;
  background: linear-gradient(to right, #4f88fb 241px, #dcdfe6 241px);
`;
const Steps = styled.div`
  display: grid;
  grid-template-columns: repeat(4, 60.4px) 1fr;
  margin-top: 2px;
`;
const Step = styled.div`
  display: flex;
  align-items: flex-start;
  gap: 2.8px;
  > svg { flex: none; margin-top: 1px; }
`;
const PenTabs = styled.div`
  display: flex;
  flex: none;
  gap: 0.5px;
  height: 16px;
  background: #f3f3f3;
`;
const PenTab = styled.div<{ $on?: boolean; $pl: number }>`
  width: 54.7px;
  padding: ${(p) => (p.$on ? 3.3 : 4.5)}px 0 0 ${(p) => p.$pl}px;
  background: ${(p) => (p.$on ? "#fff" : "#e0e0e0")};
  border-top: ${(p) => (p.$on ? "1.5px solid #6ea0fb" : "0")};
`;
const PenCard = styled.article<{ $c: string; $sel?: boolean }>`
  height: 34px;
  margin-bottom: 2.4px;
  padding: 2.4px 3px 0 4px;
  border-left: 2px solid ${(p) => p.$c};
  background: ${(p) => (p.$sel ? "#7dcffa" : "#f3f3f3")};
`;
const PEN: [string, string][] = [
  ["Critical risk", "#4fa8d4"], ["High risk", "#ffc29a"], ["High risk", "#ffc29a"],
  ["Medium risk", "#f6df94"], ["Medium risk", "#f6df94"], ["Medium risk", "#f6df94"], ["", "#dcc8ff"],
];
const StepIcon = ({ kind }: { kind: number }) => (
  <svg width="5.5" height="5.5" viewBox="0 0 11 11" fill={kind === 1 ? BLUE : "none"} stroke={kind === 2 ? "#555" : "#3c7cf8"} strokeWidth="1.1">
    <circle cx="5.5" cy="5.5" r="4.8" />
    {kind === 0 && <path d="M3.300 5.700L5 7.200l3-3.200" />}
  </svg>
);
const StepLabel = styled(Text)`
  line-height: 6.2px;
  white-space: pre;
`;

const PenTest = () => (
  <Screen $bg="#fff">
    <Stack>
      <PenHead>
        <Line $h={7} $gap={3}><Arrow left /><Text $s={4.9} $c="#3c7cf8">Back to homepage</Text></Line>
        <Line $h={10} $mt={4.5} $gap={3}>
          <Text $s={7.05}>Pen Test_Placeholder here</Text>
          <Text $s={4.7} $c="#3c7cf8">Edit</Text>
          <svg width="5" height="5" viewBox="0 0 10 10" fill="none" stroke="#2f6ff2" strokeWidth="1.2"><path d="M0 9.300h10M2 7l.5-2L7 .7l1.700 1.700L4.200 6.700z" /></svg>
        </Line>
        <Line $h={7} $mt={1.5}><Text $s={4.9} $c="#666">Updated 2 days ago</Text></Line>
        <Progress />
        <Steps>
          {["New request", "Waiting for\napproval", "Request scheduled", "Testing in progress", "Complete"].map((s, i) => (
            <Step key={s}><StepIcon kind={i < 3 ? 0 : i - 2} /><StepLabel $s={4.9} $c="#555">{s}</StepLabel></Step>
          ))}
        </Steps>
      </PenHead>
      <PenTabs>
        <PenTab $pl={6}><Text $s={4.95} $c="#666">Request details</Text></PenTab>
        <PenTab $pl={5.5} $on><Text $s={4.95} $w={700} $c="#161616">Finding details</Text></PenTab>
        <PenTab $pl={5.5}><Text $s={4.95} $c="#777">Testing report</Text></PenTab>
      </PenTabs>
      <Pane $pad="10px 0 0 0.5px">
        <Line $h={8} $gap={6}>
          <Text $s={4.7} $c="#555">Sort by</Text>
          <Line $h={8} $gap={4}><Text $s={4.95} $c="#333">Create date: Newer first</Text><Chevron s={4} /></Line>
          <Pane $pad="0 0 0 174.5px">
            <Line $h={8} $gap={3.5}>
              <svg width="5" height="5" viewBox="0 0 10 10" fill="none" strokeWidth="2"><circle cx="5" cy="5" r="4" stroke="#cddffe" /><path d="M5 9a4 4 0 0 1 0-8" stroke="#2f6ff2" /></svg>
              <Text $s={4.5} $c="#666">Test in progress</Text>
            </Line>
          </Pane>
        </Line>
      </Pane>
      <Pane $pad="2.2px 0 0">
        {PEN.map(([risk, c], i) => (
          <PenCard key={i} $c={c} $sel={i === 0}>
            <Line $h={8} $between>
              <Text $s={5} $w={700} $c={i ? "#1c1c1c" : "#12749c"}>Finding name goes here</Text>
              <Chevron s={5} c={i ? "#666" : "#2a7ea5"} />
            </Line>
            {risk && (
              <>
                <Line $h={7} $mt={7}><Text $s={4.4} $c={i ? "#777" : "#3d93b8"}>{risk}</Text></Line>
                <Line $h={7}><Text $s={4.5} $c={i ? "#666" : "#2d84a8"}>XFR-G210JN39VY</Text></Line>
              </>
            )}
          </PenCard>
        ))}
      </Pane>
    </Stack>
  </Screen>
);

/* ---------- overlay ---------- */

const Stamp = styled.div`
  position: absolute;
  left: 13px;
  top: 224px;
  font-family: "Liberation Serif", serif;
  font-size: 157px;
  line-height: 180px;
  white-space: nowrap;
  color: #f5220c;
  -webkit-text-stroke: 1px #f5220c;
  text-shadow: 0.5px 0.5px 0 #6b150d, -0.5px -0.5px 0 #a01c10, 1px 1px 1px #00000090;
`;
const StampLetter = styled.span<{ $after: number }>`
  letter-spacing: ${(p) => p.$after}px;
`;

export default function App() {
  return (
    <Page>
      <Global />
      <FrameRow $cols="377px 404px 415px">
        <Frame><Whiteboard /></Frame>
        <Frame><ThreatMonitoring /></Frame>
        <Frame><ManagedServices /></Frame>
      </FrameRow>
      <Seam />
      <FrameRow $cols="425px 465px 306px">
        <Frame><Requests /></Frame>
        <Frame $pad="5px 4px 5px 6px"><TestDetail /></Frame>
        <Frame $pad="0 0 5px 6px"><PenTest /></Frame>
      </FrameRow>
      <Cursor x={400} y={130} />
      <Cursor x={807} y={84} />
      <Stamp>
        <StampLetter $after={2.5}>N</StampLetter>
        <StampLetter $after={-1.5}>D</StampLetter>
        <span>A</span>
      </Stamp>
    </Page>
  );
}
